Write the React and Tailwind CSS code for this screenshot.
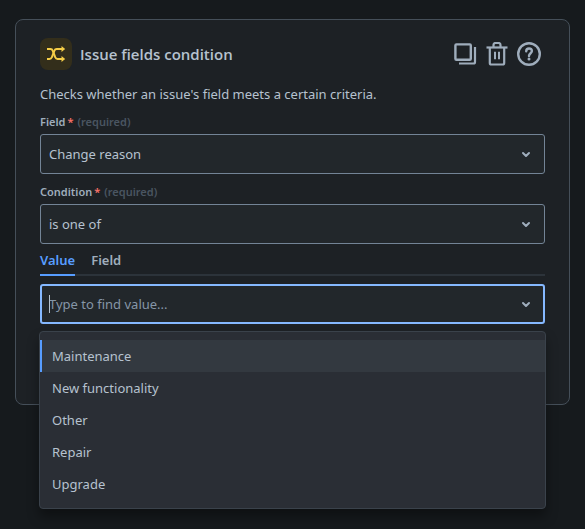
import { useState } from 'react';

const OPTIONS = ['Maintenance', 'New functionality', 'Other', 'Repair', 'Upgrade'];

export default function App() {
  const [tab, setTab] = useState('value');

  return (
    <main className="min-h-screen bg-[#161a1d] px-[15px] py-[19px] font-['Noto_Sans',sans-serif] text-[13px] leading-5 text-[#b6c2cf]">
      <section className="rounded-lg border border-[#454f59] bg-[#1d2125] px-6 pt-[18px] pb-20">
        <header className="flex items-center gap-2">
          <span className="flex h-8 w-8 items-center justify-center rounded-lg bg-[#332e1b] text-[#f5cd47]">
            <ShuffleIcon />
          </span>
          <h1 className="flex-1 font-['Open_Sans',sans-serif] text-[15px] font-semibold text-[#b6c2cf]">Issue fields condition</h1>
          <div className="flex gap-2 pr-1 text-[#9fadbc]">
            <button type="button" aria-label="Duplicate"><CopyIcon /></button>
            <button type="button" aria-label="Delete"><TrashIcon /></button>
            <button type="button" aria-label="Help"><HelpIcon /></button>
          </div>
        </header>

        <p className="mt-[14px]">Checks whether an issue&apos;s field meets a certain criteria.</p>

        <SelectField id="field" label="Field" options={['Change reason']} />
        <SelectField id="condition" label="Condition" options={['is one of']} />

        <div role="tablist" className="flex gap-4 border-b-2 border-[#2c333a]">
          <Tab active={tab === 'value'} onClick={() => setTab('value')}>Value</Tab>
          <Tab active={tab === 'field'} onClick={() => setTab('field')}>Field</Tab>
        </div>

        <div className="relative mt-2">
          <input
            type="text"
            aria-label="Value"
            placeholder="Type to find value..."
            className="block h-10 w-full rounded-[3px] border-2 border-[#85b8ff] bg-[#22272b] px-[7px] outline-none placeholder:text-[#8696a7]"
          />
          <span className="absolute top-[11px] left-[9px] h-[18px] w-px bg-[#b6c2cf]" />
          <ChevronIcon />
          <ul className="absolute top-[47px] -right-px -left-px z-10 rounded border border-[#3a424b] bg-[#2a2e35] py-2 shadow-[0_8px_12px_rgba(3,4,4,0.36)]">
            {OPTIONS.map((option, index) => (
              <li key={option}>
                <button
                  type="button"
                  className={
                    index === 0
                      ? 'block h-8 w-full border-l-2 border-[#579dff] bg-[#333940] px-[10px] text-left'
                      : 'block h-8 w-full px-3 text-left'
                  }
                >
                  {option}
                </button>
              </li>
            ))}
          </ul>
        </div>
      </section>
    </main>
  );
}

function SelectField({ id, label, options }) {
  return (
    <div className="pt-2">
      <label htmlFor={id} className="flex h-[22px] gap-1 text-[11px] font-semibold text-[#9fadbc]">
        <span>
          {label}
          <span className="pl-0.5 text-[#f87168]">*</span>
        </span>
        <span className="text-[#4a5561]">(required)</span>
      </label>
      <div className="relative">
        <select id={id} className="block h-10 w-full appearance-none rounded-[3px] border border-[#738496] bg-[#22272b] px-2">
          {options.map((option) => (
            <option key={option}>{option}</option>
          ))}
        </select>
        <ChevronIcon />
      </div>
    </div>
  );
}

function Tab({ active, onClick, children }) {
  return (
    <button
      type="button"
      role="tab"
      aria-selected={active}
      onClick={onClick}
      className={
        active
          ? '-mb-0.5 border-b-2 border-[#579dff] pt-[6px] pb-1 font-semibold text-[#579dff]'
          : '-mb-0.5 border-b-2 border-transparent pt-[6px] pb-1 font-semibold text-[#9fadbc]'
      }
    >
      {children}
    </button>
  );
}

function ChevronIcon() {
  return (
    <svg viewBox="0 0 24 24" fill="none" stroke="#9fadbc" strokeWidth="2" strokeLinecap="round" strokeLinejoin="round" className="pointer-events-none absolute top-2 right-[7px] h-6 w-6" aria-hidden="true">
      <path d="M9 11l3 3 3-3" />
    </svg>
  );
}

function ShuffleIcon() {
  return (
    <svg viewBox="0 0 24 24" fill="none" stroke="currentColor" strokeWidth="2" className="h-6 w-6" aria-hidden="true">
      <path d="M3 7h3.5c1.2 0 1.8.6 2.3 1.8l2.4 6.4c.5 1.2 1.1 1.8 2.3 1.8H19" />
      <path d="M3 17h2.5c1.2 0 1.900-.6 2.400-1.800l2.400-6.400C10.800 7.600 11.500 7 12.700 7H19" />
      <path d="M17.500 4l3.700 3-3.700 3zM17.500 14l3.700 3-3.700 3z" fill="currentColor" stroke="none" />
    </svg>
  );
}

function CopyIcon() {
  return (
    <svg viewBox="0 0 24 24" fill="none" stroke="currentColor" strokeWidth="2.4" className="h-6 w-6" aria-hidden="true">
      <rect x="2.4" y="2.4" width="15.4" height="15.4" rx="1" />
      <path d="M22 5v15a1.500 1.500 0 0 1-1.500 1.500H6" strokeWidth="2.2" />
    </svg>
  );
}

function TrashIcon() {
  return (
    <svg viewBox="0 0 24 24" fill="none" stroke="currentColor" strokeWidth="2.2" className="h-6 w-6" aria-hidden="true">
      <path d="M1.500 5.500h21" />
      <path d="M8.500 5V3a2 2 0 0 1 2-2h3a2 2 0 0 1 2 2v2" />
      <path d="M4.800 5.500V21a1.500 1.500 0 0 0 1.500 1.500h11.400a1.500 1.500 0 0 0 1.500-1.500V5.500" />
      <path d="M10 9.800v7.400M14 9.800v7.400" strokeWidth="2" />
    </svg>
  );
}

function HelpIcon() {
  return (
    <svg viewBox="0 0 24 24" fill="none" stroke="currentColor" strokeWidth="2.4" className="h-6 w-6" aria-hidden="true">
      <circle cx="12" cy="12" r="10.8" />
      <path d="M9.200 9.300c0-1.700 1.200-2.800 2.800-2.800s2.900 1.100 2.900 2.600c0 2.200-2.900 2.200-2.900 4.900" strokeLinecap="round" />
      <circle cx="12" cy="17" r="1.5" fill="currentColor" stroke="none" />
    </svg>
  );
}
